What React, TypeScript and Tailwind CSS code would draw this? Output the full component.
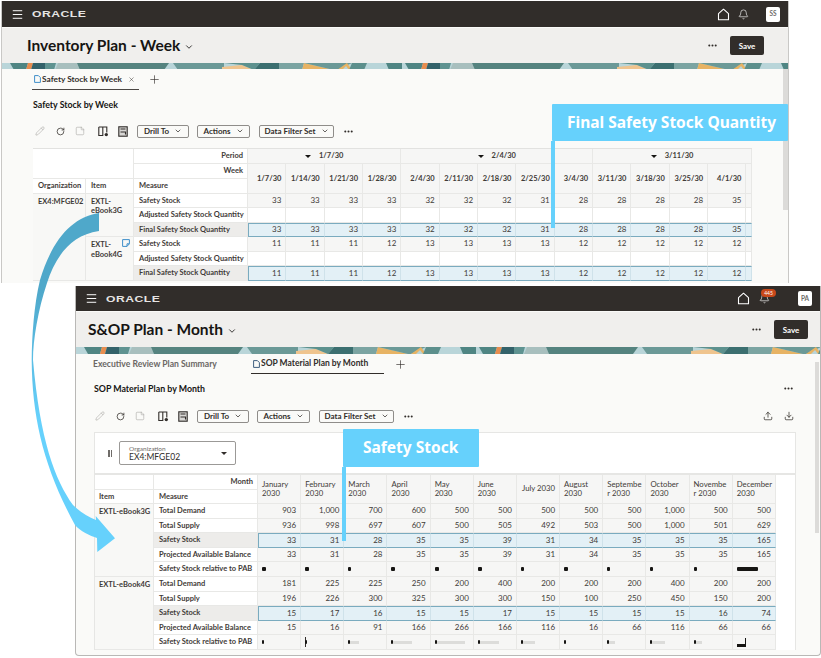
import React from "react";
import { Bell, ChevronDown, Download, Ellipsis, Menu, Pencil, Plus, RotateCw, StickyNote, Upload, X } from "lucide-react";

function Home() {
  return (
    <svg width="13" height="13" viewBox="0 0 13 13" fill="none" stroke="currentColor" strokeWidth="1.1">
      <path d="M1.5 5.6 6.5 1.2l5 4.4v6.2h-10z" strokeLinejoin="round" />
    </svg>
  );
}

function Banner({ height }: { height: string }) {
  const pieces: [string, string][] = [
    ["8,0 26,0 24,7 12,7", "#4f8583"], ["26,0 31,0 29,7 24,7", "#e88d4f"], ["31,0 43,0 43,7 29,7", "#33626a"],
    ["43,0 54,0 52,7 43,7", "#5f9391"], ["56,0 75,0 78,7 53,7", "#a8bfbe"], ["75,0 167,0 162,7 78,7", "#55837f"],
    ["171,0 222,0 222,7 176,7", "#6b9997"], ["220,4 240,2 252,7 220,7", "#efc48e"], ["222,0 258,0 252,7 240,2", "#5d918e"],
    ["258,0 277,0 277,7 252,7", "#3c6f70"], ["277,0 302,0 300,7 277,7", "#7ba4a2"], ["302,0 332,7 300,7", "#e7b364"],
    ["302,0 350,0 335,7 332,7", "#6b9997"], ["335,7 345,0 350,7 347,7 344,3 340,7", "#e7b364"], ["350,0 365,0 362,7 347,7", "#5c8f8c"],
    ["384,0 400,0 400,7 387,7", "#4f8583"],
  ];
  return (
    <div className={`${height} shrink-0 overflow-hidden bg-[#b9d5d9]`}>
      <svg width="790" height="7" viewBox="0 0 790 7" className="block">
        {pieces.map(([p, c], i) => <polygon key={i} points={p} fill={c} />)}
        <g transform="translate(395 0)">
          {pieces.map(([p, c], i) => <polygon key={i} points={p} fill={c} />)}
        </g>
      </svg>
    </div>
  );
}

function NavBar({ initials, badge, height, left, homeGap, right, avatarGap }: { initials: string; badge?: string; height: string; left: string; homeGap: string; right: string; avatarGap: string }) {
  return (
    <div className={`${height} shrink-0 bg-[#312d2a] flex items-center text-white ${left} ${right}`}>
      <Menu size={13} strokeWidth={1.8} />
      <span className="ml-[8px] w-[54px] origin-left scale-x-[1.28] text-[9.5px] leading-none font-bold tracking-[0.4px] text-[#e6e5e4] [font-family:'Liberation_Sans',sans-serif]">ORACLE</span>
      <div className="ml-auto flex items-center">
        <Home />
        <div className={`relative ${homeGap}`}>
          <Bell size={11} strokeWidth={1.4} />
          {badge && (
            <span className="absolute left-[2px] top-[-4px] flex h-[8px] w-[15px] items-center justify-center rounded-full bg-[#c8481a] text-[5px] leading-none">{badge}</span>
          )}
        </div>
        <div className={`${avatarGap} flex h-[15px] w-[14px] items-center justify-center rounded-[2px] bg-white text-[6.5px] font-bold text-[#6f6c69]`}>{initials}</div>
      </div>
    </div>
  );
}

function TitleBar({ title, left, right }: { title: string; left: string; right: string }) {
  return (
    <div className={`mt-px h-[35px] shrink-0 bg-[#f0efed] flex items-center ${left} ${right}`}>
      <h1 className="text-[15.5px] font-bold leading-none text-[#161513]">{title}</h1>
      <ChevronDown size={10} strokeWidth={2} className="ml-[4px] mt-[2px] text-[#161513]" />
      <Ellipsis size={11} strokeWidth={2.5} className="ml-auto text-[#312d2a]" />
      <button className="ml-[12px] flex h-[19px] w-[34px] items-center justify-center rounded-[2px] bg-[#312d2a] text-[8px] font-bold text-white">Save</button>
    </div>
  );
}

function BookIcon() {
  return (
    <svg width="11" height="11" viewBox="0 0 11 11" fill="none" stroke="#312d2a" strokeWidth="1.1">
      <path d="M.8 1h8v5.5M4.8 1v8.5H.8V1" />
      <circle cx="8.3" cy="8.6" r="1.7" fill="#312d2a" stroke="none" />
    </svg>
  );
}

function CalcIcon() {
  return (
    <svg width="10" height="11" viewBox="0 0 10 11" fill="none" stroke="#312d2a" strokeWidth="1.1">
      <rect x=".8" y=".8" width="8.4" height="9.4" fill="#d8d7d5" />
      <path d="M2.5 3h5M2.5 6h5v2.5" />
    </svg>
  );
}

function Toolbar({ className }: { className: string }) {
  const buttons = [["Drill To", "w-[52px]"], ["Actions", "w-[53px] ml-[8px]"], ["Data Filter Set", "w-[75px] ml-[9px]"]];
  return (
    <div className={`flex items-center ${className}`}>
      <Pencil size={10} strokeWidth={1.4} className="text-[#a9a7a4]" />
      <RotateCw size={9} strokeWidth={2} className="ml-[11px] text-[#312d2a]" />
      <StickyNote size={10} strokeWidth={1.4} className="ml-[10px] text-[#a9a7a4]" />
      <span className="ml-[13px]"><BookIcon /></span>
      <span className="ml-[9px]"><CalcIcon /></span>
      <div className="ml-[9px] flex items-center">
        {buttons.map(([t, w]) => (
          <button key={t} className={`${w} flex h-[13px] items-center justify-center gap-[5px] rounded-[2px] border border-[#8f8d8a] text-[8px] font-bold leading-none text-[#312d2a]`}>
            {t}
            <ChevronDown size={8} strokeWidth={2.2} />
          </button>
        ))}
      </div>
      <Ellipsis size={11} strokeWidth={2.5} className="ml-[9px] text-[#312d2a]" />
    </div>
  );
}

const cellBase = "flex items-center whitespace-nowrap border-r border-b border-[#e8e8e6] text-[7.5px] font-bold leading-[9.5px] text-[#3f3b38]";

function Num({ v, tone, first, last }: { v: string; tone: "gray" | "white" | "hi"; first?: boolean; last?: boolean }) {
  const bg =
    tone === "hi"
      ? "bg-[#e3f0f6] border-y border-y-[#7aabbf] border-r-[#cfe2ea]"
      : tone === "white"
        ? "bg-white"
        : "bg-[#f6f6f5]";
  return (
    <div className={`${cellBase} justify-end pr-[4px] !text-[8px] !font-normal ${bg} ${first ? "border-l-[1.5px] border-l-[#7aabbf]" : ""} ${last ? "border-r-[1.5px] border-r-[#7aabbf]" : ""}`}>
      {v}
    </div>
  );
}

function Label({ t, hi, right }: { t: string; hi?: boolean; right?: boolean }) {
  return (
    <div className={`${cellBase} pl-[5px] pr-[4px] ${hi ? "bg-[#edecea]" : "bg-white"} ${right ? "justify-end" : ""}`}>{t}</div>
  );
}

function NoteIcon() {
  return (
    <svg width="8" height="8" viewBox="0 0 8 8" fill="none" stroke="#3f8fc9" strokeWidth="1" className="absolute right-[3px] top-[2px]">
      <path d="M.6.6h6.8v4.2L5 7.4H.6z" />
      <path d="M5 7.4V4.8h2.4" />
    </svg>
  );
}

const weeks = ["1/7/30", "1/14/30", "1/21/30", "1/28/30", "2/4/30", "2/11/30", "2/18/30", "2/25/30", "3/4/30", "3/11/30", "3/18/30", "3/25/30", "4/1/30"];
const w1 = ["33", "33", "33", "33", "32", "32", "32", "31", "28", "28", "28", "28", "35"];
const w2 = ["11", "11", "11", "12", "13", "13", "13", "13", "12", "12", "12", "12", "12"];

function WeekItem({ item, vals, note }: { item: string; vals: string[]; note?: boolean }) {
  const measures: [string, string[], "gray" | "white" | "hi"][] = [
    ["Safety Stock", vals, "gray"],
    ["Adjusted Safety Stock Quantity", vals.map(() => ""), "white"],
    ["Final Safety Stock Quantity", vals, "hi"],
  ];
  return (
    <>
      <div className={`${cellBase} relative row-span-3 items-start !whitespace-pre-line bg-[#f8f8f6] pl-[5px] pt-[3px]`}>
        {item}
        {note && <NoteIcon />}
      </div>
      {measures.map(([m, vs, tone]) => (
        <React.Fragment key={m}>
          <Label t={m} hi={tone === "hi"} />
          {vs.map((v, j) => <Num key={j} v={v} tone={tone} first={tone === "hi" && j === 0} />)}
          <Num v="" tone={tone} />
        </React.Fragment>
      ))}
    </>
  );
}

function WeekTable() {
  const caret = "mr-[8px] inline-block border-x-[3px] border-t-[3px] border-x-transparent border-t-[#161513]";
  return (
    <div className="ml-[31px] grid w-[719px] grid-cols-[53px_48px_114px_repeat(13,38.35px)_5.45px] grid-rows-[15px_14.5px_15px_repeat(6,14.5px)] border-t border-[#e2e2e0]">
      <div className={`${cellBase} col-span-2 row-span-2 bg-white`} />
      <Label t="Period" right />
      {[["1/7/30", "col-span-4"], ["2/4/30", "col-span-5"], ["3/11/30", "col-span-5"]].map(([t, s]) => (
        <div key={t} className={`${cellBase} ${s} justify-center bg-[#f6f6f5]`}>
          <span className={caret} />
          {t}
        </div>
      ))}
      <Label t="Week" right />
      {weeks.map((w) => <div key={w} className={`${cellBase} row-span-2 justify-end bg-[#f6f6f5] pr-[4px]`}>{w}</div>)}
      <div className={`${cellBase} row-span-2 bg-[#f6f6f5]`} />
      <div className={`${cellBase} bg-white pl-[5px]`}>Organization</div>
      <div className={`${cellBase} bg-white pl-[5px]`}>Item</div>
      <Label t="Measure" />
      <div className={`${cellBase} row-span-6 items-start bg-[#f8f8f6] pl-[5px] pt-[3px]`}>EX4:MFGE02</div>
      <WeekItem item={"EXTL-\neBook3G"} vals={w1} />
      <WeekItem item={"EXTL-\neBook4G"} vals={w2} note />
    </div>
  );
}

const months = ["January\n2030", "February\n2030", "March\n2030", "April\n2030", "May 2030", "June\n2030", "July 2030", "August\n2030", "Septembe\nr 2030", "October\n2030", "Novembe\nr 2030", "December\n2030"];

const rows3G: [string, string[]][] = [
  ["Total Demand", ["903", "1,000", "700", "600", "500", "500", "500", "500", "500", "1,000", "500", "500"]],
  ["Total Supply", ["936", "998", "697", "607", "500", "505", "492", "503", "500", "1,000", "501", "629"]],
  ["Safety Stock", ["33", "31", "28", "35", "35", "39", "31", "34", "35", "35", "35", "165"]],
  ["Projected Available Balance", ["33", "31", "28", "35", "35", "39", "31", "34", "35", "35", "35", "165"]],
];
const rows4G: [string, string[]][] = [
  ["Total Demand", ["181", "225", "225", "250", "200", "400", "200", "200", "200", "400", "200", "200"]],
  ["Total Supply", ["196", "226", "300", "325", "300", "300", "150", "100", "250", "450", "150", "200"]],
  ["Safety Stock", ["15", "17", "16", "15", "15", "17", "15", "15", "15", "15", "16", "74"]],
  ["Projected Available Balance", ["15", "16", "91", "166", "266", "166", "116", "16", "66", "116", "66", "66"]],
];

type Bar = { w: number; track?: number; tick?: boolean; tall?: boolean };

function BarCell({ w, track, tick, tall }: Bar) {
  return (
    <div className={`${cellBase} bg-[#f6f6f5] pl-[4px]`}>
      {tick && <span className="mr-[-1px] h-[10px] w-px bg-[#312d2a]" />}
      {tall ? (
        <span className="flex items-end">
          <span className="h-[3px] w-[8px] bg-[#161513]" />
          <span className="h-[9px] w-px bg-[#161513]" />
        </span>
      ) : (
        <span className="flex items-center">
          <span className="h-[4px] rounded-[1px] bg-[#161513]" style={{ width: w }} />
          {track ? <span className="h-[3px] bg-[#dcdcda]" style={{ width: track }} /> : null}
        </span>
      )}
    </div>
  );
}

const bars1: Bar[] = [4, 4, 3, 4, 4, 4, 3, 4, 3, 3, 3, 21].map((w) => ({ w }));
const bars2: Bar[] = [
  { w: 2 }, { w: 2, tick: true }, { w: 2, track: 9 }, { w: 2, track: 19 }, { w: 2, track: 28 }, { w: 2, track: 19 },
  { w: 2, track: 12 }, { w: 2 }, { w: 2, track: 6 }, { w: 2, track: 13 }, { w: 2, track: 6 }, { w: 2, tall: true },
];

function MonthItem({ item, rows, bars }: { item: string; rows: [string, string[]][]; bars: Bar[] }) {
  return (
    <>
      <div className={`${cellBase} row-span-5 items-start bg-[#f8f8f6] pl-[4px] pt-[3px]`}>{item}</div>
      {rows.map(([m, vals]) => {
        const hi = m === "Safety Stock";
        return (
          <React.Fragment key={m}>
            <Label t={m} hi={hi} />
            {vals.map((v, i) => <Num key={i} v={v} tone={hi ? "hi" : "gray"} first={hi && i === 0} last={hi && i === 11} />)}
          </React.Fragment>
        );
      })}
      <Label t="Safety Stock relative to PAB" />
      {bars.map((b, i) => <BarCell key={i} {...b} />)}
    </>
  );
}

function MonthTable() {
  return (
    <div className="grid w-[681px] grid-cols-[59px_104px_repeat(12,43.17px)] grid-rows-[15px_14px_repeat(10,14.6px)]">
      <div className={`${cellBase} bg-white`} />
      <Label t="Month" right />
      {months.map((m) => {
        const single = !m.includes("\n");
        return (
          <div key={m} className={`${cellBase} row-span-2 !whitespace-pre-line bg-[#f6f6f5] pl-[4px] !text-[7.75px] !font-normal ${single ? "justify-end pr-[4px]" : ""}`}>{m}</div>
        );
      })}
      <div className={`${cellBase} bg-white pl-[4px]`}>Item</div>
      <Label t="Measure" />
      <MonthItem item="EXTL-eBook3G" rows={rows3G} bars={bars1} />
      <MonthItem item="EXTL-eBook4G" rows={rows4G} bars={bars2} />
    </div>
  );
}

function Callout({ text, box, stem, pad }: { text: string; box: string; stem: string; pad: string }) {
  return (
    <>
      <div className={`absolute flex items-center rounded-[1px] bg-[#66d1fc] text-[15.5px] font-bold leading-none text-white [font-family:'Noto_Sans',sans-serif] ${box} ${pad}`}>{text}</div>
      <div className={`absolute w-[3.5px] bg-[#66d1fc] ${stem}`} />
    </>
  );
}

function Arrow() {
  return (
    <svg className="absolute left-0 top-0" width="821" height="658" viewBox="0 0 821 658">
      <defs>
        <linearGradient id="arc" gradientUnits="userSpaceOnUse" x1="0" y1="290" x2="0" y2="420">
          <stop offset="0" stopColor="#4fa8ca" />
          <stop offset="1" stopColor="#66d1fc" />
        </linearGradient>
      </defs>
      <path
        fill="url(#arc)"
        d="M99 213C72 217 52 240 40 280C34 305 32 335 31.7 360C32 420 45 470 75 525C80 531 90 536 97 538L97.3 552L115 538.3L95.7 516L96 520C88 517 80 512 73 505C55 480 40 440 33 360C33 340 38 310 47 283C55 258 70 235 99 231Z"
      />
    </svg>
  );
}

export default function App() {
  return (
    <div className="relative h-[658px] w-[821px] overflow-hidden bg-white [font-family:Lato,'Liberation_Sans',sans-serif]">
      {/* Back window */}
      <section className="absolute left-[1px] top-[1px] flex h-[282px] w-[788px] flex-col overflow-hidden border-x border-[#c9c8c6] bg-[#fafaf8]">
        <NavBar initials="SS" height="h-[26px]" left="pl-[9px]" right="pr-[8px]" homeGap="ml-[8px]" avatarGap="ml-[17px]" />
        <TitleBar title="Inventory Plan - Week" left="pl-[25px]" right="pr-[24px]" />
        <Banner height="h-[6px]" />
        <div className="ml-[30px] flex h-[21px] shrink-0 items-center">
          <div className="flex h-full w-[107px] items-center whitespace-nowrap border-b-[1.5px] border-[#4a4643] pl-[2px] text-[8.3px] font-bold text-[#312d2a]">
            <svg width="7" height="8" viewBox="0 0 7 8" fill="none" stroke="#3f8fc9" strokeWidth="1"><path d="M.6.6h3.8l2 2v4.8H.6z" /></svg>
            <span className="ml-px">Safety Stock by Week</span>
            <X size={7} strokeWidth={1.6} className="ml-[6px]" />
          </div>
          <Plus size={13} strokeWidth={1.2} className="ml-[9px] text-[#312d2a]" />
        </div>
        <h2 className="ml-[31px] mt-[9px] h-[11px] text-[8.8px] font-bold leading-[11px] text-[#161513]">Safety Stock by Week</h2>
        <Toolbar className="ml-[33px] mt-[14px] h-[14px]" />
        <div className="mt-[10px]"><WeekTable /></div>
        <div className="absolute right-0 top-[68px] h-[141px] w-[5px] bg-[#dcdbd9]" />
      </section>

      {/* Front window */}
      <section className="absolute left-[75px] top-[286px] flex h-[370px] w-[746px] flex-col overflow-hidden rounded-b-[4px] border-x border-b border-[#b9b8b6] bg-[#fafaf8]">
        <NavBar initials="PA" badge="445" height="h-[25px]" left="pl-[9px]" right="pr-[8px]" homeGap="ml-[9px]" avatarGap="ml-[28px]" />
        <TitleBar title="S&OP Plan - Month" left="pl-[12px]" right="pr-[12px]" />
        <Banner height="h-[7px]" />
        <div className="ml-[17px] flex h-[20px] shrink-0 items-center whitespace-nowrap text-[8.6px] font-bold">
          <span className="w-[158px] text-[#6b6764]">Executive Review Plan Summary</span>
          <div className="flex h-full w-[133px] items-center border-b-[1.5px] border-[#312d2a] pl-[2px] text-[8.5px] text-[#312d2a]">
            <svg width="7" height="8" viewBox="0 0 7 8" fill="none" stroke="#3f5f7f" strokeWidth="1"><path d="M.6.6h3.8l2 2v4.8H.6z" /></svg>
            <span className="ml-px">SOP Material Plan by Month</span>
          </div>
          <Plus size={13} strokeWidth={1.2} className="ml-[10px] text-[#312d2a]" />
        </div>
        <div className="ml-[18px] mr-[26px] mt-[9px] flex h-[11px] items-center justify-between">
          <h2 className="text-[8.8px] font-bold leading-[11px] text-[#161513]">SOP Material Plan by Month</h2>
          <Ellipsis size={11} strokeWidth={2.5} className="text-[#312d2a]" />
        </div>
        <div className="mt-[15px] flex h-[14px] items-center pr-[26px]">
          <Toolbar className="ml-[19px]" />
          <Upload size={10} strokeWidth={1.8} className="ml-auto text-[#312d2a]" />
          <Download size={10} strokeWidth={1.8} className="ml-[11px] text-[#312d2a]" />
        </div>
        <div className="ml-[18px] mt-[9px] flex w-[702px] flex-col border border-b-0 border-[#e6e6e4] bg-white">
          <div className="flex h-[42px] items-center border-b-2 border-[#e6e6e4] pl-[13px]">
            <span className="flex gap-px">
              <span className="h-[7px] w-[1.5px] bg-[#6f6c69]" />
              <span className="h-[7px] w-[1.5px] bg-[#6f6c69]" />
            </span>
            <div className="ml-[7px] flex h-[24px] w-[117px] items-center justify-between rounded-[2px] border border-[#9b9997] pl-[9px] pr-[8px]">
              <div className="flex flex-col">
                <span className="text-[6.5px] leading-[7px] text-[#6f6c69]">Organization</span>
                <span className="text-[8.5px] leading-[10px] text-[#312d2a]">EX4:MFGE02</span>
              </div>
              <span className="border-x-[3px] border-t-[3px] border-x-transparent border-t-[#312d2a]" />
            </div>
          </div>
          <MonthTable />
        </div>
        <div className="absolute right-[1px] top-[76px] h-[171px] w-[4px] bg-[#dcdbd9]" />
      </section>

      <Callout text="Final Safety Stock Quantity" box="left-[552px] top-[104px] h-[37px] w-[236px]" stem="left-[551px] top-[141px] h-[87px]" pad="pl-[15px]" />
      <Callout text="Safety Stock" box="left-[343px] top-[429px] h-[38px] w-[136px]" stem="left-[342px] top-[467px] h-[74px]" pad="pl-[20px]" />
      <Arrow />
    </div>
  );
}
